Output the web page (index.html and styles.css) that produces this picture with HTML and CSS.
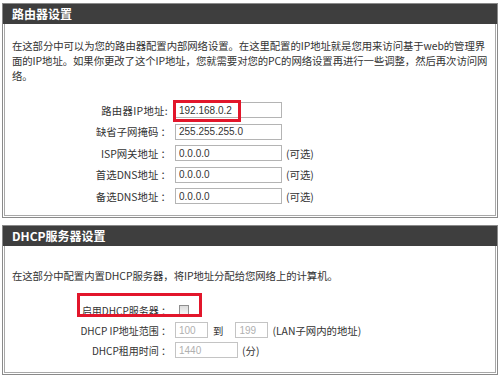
FILE: index.html
```html
<!DOCTYPE html>
<html lang="zh-CN">
<head>
    <meta charset="UTF-8" />
    <title>路由器设置</title>
    <link rel="stylesheet" href="styles.css">
</head>
<body>

    <div class="panel panel-router">
        <div class="panel-head">路由器设置</div>
        <p class="intro">在这部分中可以为您的路由器配置内部网络设置。在这里配置的IP地址就是您用来访问基于web的管理界<br>面的IP地址。如果你更改了这个IP地址，您就需要对您的PC的网络设置再进行一些调整，然后再次访问网<br>络。</p>

        <div class="rows rows-router">
            <div class="row">
                <label class="lbl-ip">路由器IP地址:</label>
                <input class="txt" type="text" value="192.168.0.2">
                <span class="mark mark-ip"></span>
            </div>
            <div class="row">
                <label>缺省子网掩码 ：</label>
                <input class="txt" type="text" value="255.255.255.0">
            </div>
            <div class="row">
                <label>ISP网关地址 ：</label>
                <input class="txt" type="text" value="0.0.0.0">
                <span class="note">(可选)</span>
            </div>
            <div class="row">
                <label>首选DNS地址 ：</label>
                <input class="txt" type="text" value="0.0.0.0">
                <span class="note">(可选)</span>
            </div>
            <div class="row">
                <label>备选DNS地址 ：</label>
                <input class="txt" type="text" value="0.0.0.0">
                <span class="note">(可选)</span>
            </div>
        </div>
    </div>

    <div class="panel panel-dhcp">
        <div class="panel-head">DHCP服务器设置</div>
        <p class="intro intro-dhcp">在这部分中配置内置DHCP服务器，将IP地址分配给您网络上的计算机。</p>

        <div class="rows rows-dhcp">
            <div class="row">
                <label>启用DHCP服务器 ：</label>
                <input class="chk" type="checkbox">
                <span class="mark mark-dhcp"></span>
            </div>
            <div class="row">
                <label>DHCP IP地址范围 ：</label>
                <input class="txt txt-short" type="text" value="100" disabled>
                <span class="to">到</span>
                <input class="txt txt-short" type="text" value="199" disabled>
                <span class="note">(LAN子网内的地址)</span>
            </div>
            <div class="row">
                <label>DHCP租用时间 ：</label>
                <input class="txt txt-lease" type="text" value="1440" disabled>
                <span class="note">(分)</span>
            </div>
        </div>
    </div>

</body>
</html>
```

FILE: styles.css
```css
body {
    margin: 0;
    padding: 3px 2px 0 2px;
    background-color: #fff;
    color: #333;
    font-family: "Noto Sans CJK SC", sans-serif;
    font-size: 10.4px;
}

.panel {
    box-sizing: border-box;
    border: 1px solid #8a8a8a;
    box-shadow: inset 0 0 0 1px #fff, inset 0 0 0 2px #a8a8a8;
}

.panel-router {
    height: 215px;
}

.panel-dhcp {
    height: 150px;
    margin-top: 7px;
}

.panel-head {
    height: 20px;
    line-height: 20px;
    padding-left: 9px;
    background-color: #3e3e3e;
    color: #fff;
    font-weight: bold;
    font-size: 12px;
}

.intro {
    margin: 13.5px 0 0 0;
    padding-left: 9px;
    line-height: 15px;
    white-space: nowrap;
    letter-spacing: -0.08px;
}

.intro-dhcp {
    margin-top: 21.5px;
}

.rows-router {
    margin-top: 17.25px;
}

.rows-router .row {
    height: 21.4px;
}

.rows-dhcp {
    margin-top: 17.5px;
}

.rows-dhcp .row {
    height: 20px;
}

.rows-dhcp label {
    font-size: 10px;
}

.row {
    display: flex;
    align-items: center;
    position: relative;
}

.row label {
    width: 168px;
    margin-right: 4px;
    text-align: right;
    white-space: nowrap;
}

.row .lbl-ip {
    box-sizing: border-box;
    padding-right: 3px;
    letter-spacing: 0.3px;
}

.txt {
    box-sizing: border-box;
    width: 107px;
    height: 16px;
    margin: 0;
    padding: 0 0 0 3px;
    border: 1px solid #b4b4b4;
    background-color: #fff;
    color: #333;
    font-family: "Liberation Sans", sans-serif;
    font-size: 10px;
}

.txt:disabled {
    color: #b0b0b0;
    border-color: #c4c4c4;
    background-color: #fff;
}

.txt-short {
    width: 33px;
}

.txt-lease {
    width: 63px;
}

.note {
    margin-left: 4px;
    white-space: nowrap;
}

.to {
    margin: 0 12px 0 4px;
    padding-left: 1px;
}

.chk {
    appearance: none;
    box-sizing: border-box;
    width: 10px;
    height: 10px;
    margin: 0 0 0 4px;
    border: 1px solid #8f8f8f;
    background: linear-gradient(#ddd, #f4f4f4);
}

.mark {
    position: absolute;
    box-sizing: border-box;
    border: 3px solid #e2162b;
}

.mark-ip {
    left: 170px;
    top: 0;
    width: 68px;
    height: 22px;
}

.mark-dhcp {
    left: 74px;
    top: -7px;
    width: 125px;
    height: 24px;
}
```
